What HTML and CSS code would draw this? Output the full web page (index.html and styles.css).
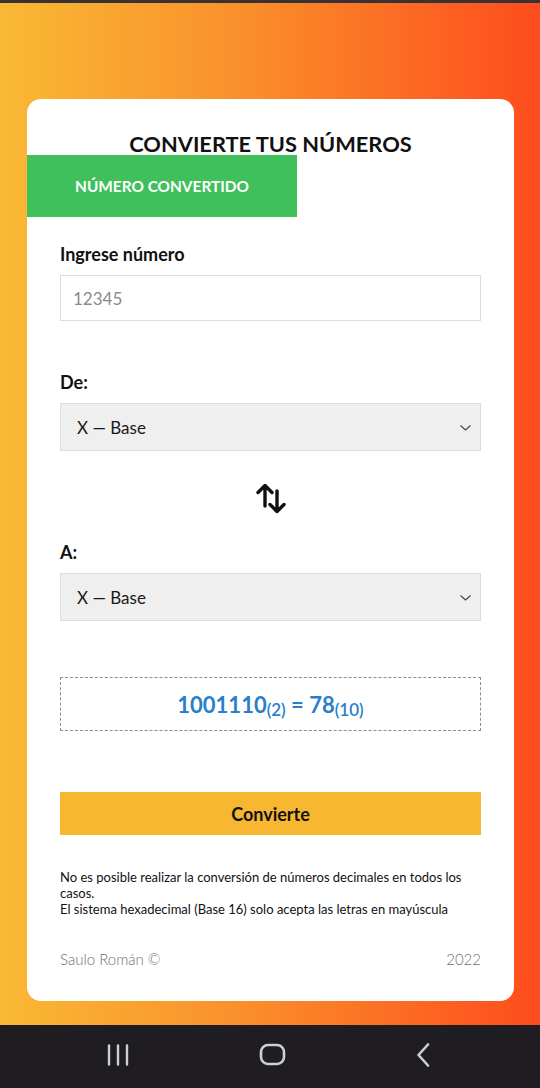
FILE: index.html
```html
<!DOCTYPE html>
<html lang="es">
<head>
<meta charset="utf-8">
<title>Convierte tus números</title>
<link rel="stylesheet" href="styles.css">
</head>
<body>
<div class="screen">
  <div class="statusbar"></div>
  <main class="bg">
    <section class="card">
      <h1 class="title">CONVIERTE TUS NÚMEROS</h1>
      <div class="tab">NÚMERO CONVERTIDO</div>
      <div class="body">
        <label class="label" for="num">Ingrese número</label>
        <input class="input" id="num" type="text" placeholder="12345">

        <label class="label label-gap" for="de">De:</label>
        <div class="select-wrap">
          <select class="select" id="de"><option>X — Base</option></select>
          <svg class="chev" width="11" height="6" viewBox="0 0 11 6"><path d="M0.5 0.5 L5.5 5 L10.5 0.5" fill="none" stroke="#444" stroke-width="1.1"/></svg>
        </div>

        <div class="swap">
          <svg width="30" height="31" viewBox="0 0 30 31">
            <path d="M9 23 V2.5 M2 9.5 L9 2.5 L16 9.5" fill="none" stroke="#111" stroke-width="3.4" stroke-linecap="round" stroke-linejoin="round"/>
            <path d="M21 8 V28.5 M14 21.5 L21 28.5 L28 21.5" fill="none" stroke="#111" stroke-width="3.4" stroke-linecap="round" stroke-linejoin="round"/>
          </svg>
        </div>

        <label class="label" for="a">A:</label>
        <div class="select-wrap">
          <select class="select" id="a"><option>X — Base</option></select>
          <svg class="chev" width="11" height="6" viewBox="0 0 11 6"><path d="M0.5 0.5 L5.5 5 L10.5 0.5" fill="none" stroke="#444" stroke-width="1.1"/></svg>
        </div>

        <div class="result">1001110<span class="sub">(2)</span> = 78<span class="sub">(10)</span></div>

        <button class="btn" type="button">Convierte</button>

        <p class="note">No es posible realizar la conversión de números decimales en todos los casos.<br>El sistema hexadecimal (Base 16) solo acepta las letras en mayúscula</p>

        <footer class="footer"><span>Saulo Román ©</span><span>2022</span></footer>
      </div>
    </section>
  </main>
  <nav class="navbar">
    <svg width="24" height="22" viewBox="0 0 24 22"><path d="M3 1.5 V20.5 M12 1.5 V20.5 M21 1.5 V20.5" stroke="#cfcfcf" stroke-width="2.4" stroke-linecap="round"/></svg>
    <svg width="28" height="24" viewBox="0 0 28 24"><rect x="2" y="2" width="23" height="19" rx="7" fill="none" stroke="#cfcfcf" stroke-width="2.6"/></svg>
    <svg width="18" height="24" viewBox="0 0 18 24"><path d="M13 1.5 L3.5 12 L13 22.5" fill="none" stroke="#cfcfcf" stroke-width="2.6" stroke-linecap="round" stroke-linejoin="round"/></svg>
  </nav>
</div>
</body>
</html>
```

FILE: styles.css
```css
* { box-sizing: border-box; }
html, body { margin: 0; padding: 0; }
body { font-family: Lato, "Noto Sans", sans-serif; color: #111; }

.screen {
  width: 540px;
  height: 1088px;
  display: flex;
  flex-direction: column;
  overflow: hidden;
}
.statusbar { height: 3px; background: #3a3232; flex: none; }
.bg {
  flex: 1;
  background: linear-gradient(to right, #f9b934 0%, #fa8f2b 45%, #fe4c1d 100%);
  padding: 96px 26px 24px 27px;
  display: flex;
}
.card {
  flex: 1;
  background: #fff;
  border-radius: 14px;
  padding: 33px 0 33px 0;
  display: flex;
  flex-direction: column;
}
.title {
  margin: 0;
  font-size: 21.8px;
  line-height: 23px;
  font-weight: 700;
  text-align: center;
  color: #111;
}
.tab {
  width: 270px;
  height: 62px;
  background: #40c05a;
  color: #fff;
  font-size: 15.4px;
  font-weight: 700;
  display: flex;
  align-items: center;
  justify-content: center;
}
.body {
  padding: 27px 33px 0 33px;
  display: flex;
  flex-direction: column;
}
.label {
  display: block;
  font-size: 18px;
  line-height: 20px;
  font-weight: 700;
  margin-bottom: 11px;
  color: #111;
}
.label-gap { margin-top: 51px; }
.input {
  height: 46px;
  border: 1px solid #dcdcdc;
  padding: 0 12px;
  font-family: Lato, sans-serif;
  font-size: 17px;
  color: #222;
  background: #fff;
  outline: none;
}
.input::placeholder { color: #8a8a8a; }
.select-wrap { position: relative; }
.select {
  -webkit-appearance: none;
  appearance: none;
  width: 100%;
  height: 48px;
  border: 1px solid #dedede;
  border-radius: 0;
  background: #efefef;
  padding: 0 16px;
  font-family: Lato, sans-serif;
  font-size: 17px;
  color: #1a1a1a;
}
.chev { position: absolute; right: 10px; top: 22px; }
.swap {
  display: flex;
  justify-content: center;
  margin: 32px 0 28px 0;
  height: 31px;
}
.result {
  margin-top: 56px;
  height: 54px;
  border: 1px dashed #8c8c8c;
  display: flex;
  align-items: center;
  justify-content: center;
  font-size: 22px;
  font-weight: 700;
  color: #2a7fcc;
  white-space: pre;
}
.sub {
  font-size: 17px;
  font-weight: 600;
  position: relative;
  top: 5px;
}
.btn {
  margin-top: 61px;
  height: 43px;
  border: none;
  background: #f7b731;
  font-family: Lato, sans-serif;
  font-size: 18px;
  font-weight: 700;
  color: #111;
  padding: 0;
}
.note {
  margin: 34px 0 0 0;
  font-size: 13px;
  line-height: 16px;
  color: #111;
}
.footer {
  margin-top: 33px;
  display: flex;
  justify-content: space-between;
  font-size: 15px;
  line-height: 18px;
  font-weight: 300;
  color: #6f6f6f;
}
.navbar {
  height: 63px;
  flex: none;
  background: #1f1d21;
  display: flex;
  align-items: center;
  justify-content: space-between;
  padding: 0 107px 3px 106px;
}
```
